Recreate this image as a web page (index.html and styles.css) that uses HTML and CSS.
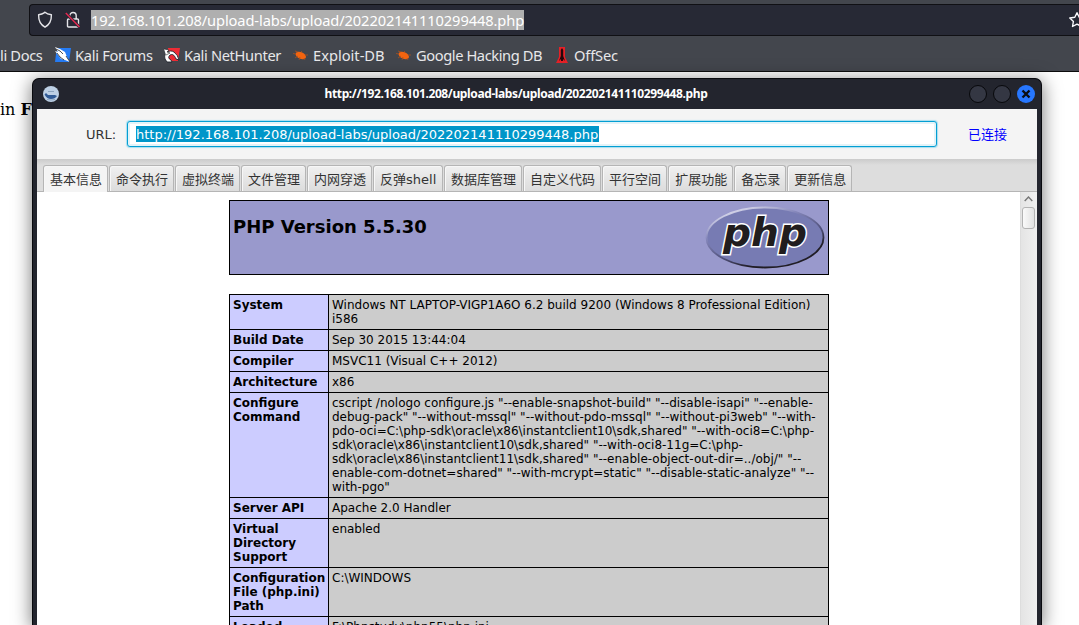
FILE: index.html
```
<!DOCTYPE html>
<html lang="zh-CN">
<head>
    <meta charset="UTF-8">
    <title>phpinfo</title>
    <link rel="stylesheet" href="styles.css">
</head>
<body>
    <header class="browser">
        <div class="address-bar">
            <svg class="shield" width="16" height="18" viewBox="0 0 16 18"><path d="M8 1.2Q10 3 14.4 3.7C14.6 10 12.6 13.5 8 16.2 3.4 13.5 1.4 10 1.6 3.7 6 3 6 2.5 8 1.2Z" fill="none" stroke="#e4e4e8" stroke-width="1.4" stroke-linejoin="round"/></svg>
            <svg class="lock" width="16" height="18" viewBox="0 0 16 18"><path d="M4.8 8V4.7a3.2 3.2 0 0 1 6.4 0V8M3.5 8h9q1 0 1 1v6q0 1-1 1h-9q-1 0-1-1V9q0-1 1-1Z" fill="none" stroke="#e4e4e8" stroke-width="1.4"/><path d="M.8 2 14.5 16" stroke="#272935" stroke-width="3.2"/><path d="M.8 2 14.5 16" stroke="#e22850" stroke-width="1.5"/></svg>
            <span class="address">192.168.101.208/upload-labs/upload/202202141110299448.php</span>
            <svg class="star" width="18" height="18" viewBox="0 0 18 18"><path d="m9 1.7 2.2 4.6 5 .7-3.6 3.5.9 5L9 13.1l-4.5 2.4.9-5L1.8 7l5-.7Z" fill="none" stroke="#fbfbfe" stroke-width="1.4" stroke-linejoin="round"/></svg>
        </div>
        <nav class="bookmarks">
            <span class="bookmark docs">li Docs</span>
            <span class="bookmark forums"><svg width="16" height="16" viewBox="0 0 16 16"><path d="M3 1h13l-2 14H0l1-8Z" fill="#267cf4"/><path d="M0 0 5 2l5 3 2 5 3 5-5-2-4-1-3-4-3-4 3 1Z" fill="#fff"/><path d="m1 2 4 2 3 3M2 6l3 4 4 3m2-4 4 6" fill="none" stroke="#20242c" stroke-width=".8"/></svg>Kali Forums</span>
            <span class="bookmark nethunter"><svg width="16" height="16" viewBox="0 0 16 16"><path d="M4 1h12l-2 13H3Z" fill="#ed2c35"/><path d="M1 12C-1 6 6 2 10 5q4 3 5 8l-3-1C10 7 8 7 6 8q-3 3 1 5l1 2H3Z" fill="#fff" stroke="#20242c" stroke-width=".9"/><path d="m0 2 5 1-2 2 3 1-4 2" stroke="#222" fill="#fff" stroke-width=".6"/></svg>Kali NetHunter</span>
            <span class="bookmark exploit"><svg width="16" height="16" viewBox="0 0 16 16"><ellipse cx="8" cy="8.5" rx="5.5" ry="3.3" transform="rotate(24 8 8)" fill="#f3640f"/><path d="m3 7-3-.5M5 5 2 4M8 5l1-1M12 8l3 0M5 9l-3 2M7 10l-1 3M11 11l1 2" stroke="#a8501e" stroke-width=".8"/></svg>Exploit-DB</span>
            <span class="bookmark google"><svg width="16" height="16" viewBox="0 0 16 16"><ellipse cx="8" cy="8.5" rx="5.5" ry="3.3" transform="rotate(24 8 8)" fill="#f3640f"/><path d="m3 7-3-.5M5 5 2 4M8 5l1-1M12 8l3 0M5 9l-3 2M7 10l-1 3M11 11l1 2" stroke="#a8501e" stroke-width=".8"/></svg>Google Hacking DB</span>
            <span class="bookmark offsec"><svg width="16" height="16" viewBox="0 0 16 16"><path d="M5 0h6v10l3 6H2l3-6Z" fill="#e52127"/><path d="M8 1 6.8 3v6L5 14l2-2v2h2v-2l2 2-1.8-5V3Z" fill="#25080c"/></svg>OffSec</span>
        </nav>
    </header>

    <main class="page">
        <p>in <b>File</b></p>
    </main>

    <section class="window">
        <div class="titlebar">
            <svg class="app-icon" width="16" height="16" viewBox="0 0 16 16"><circle cx="8" cy="8" r="8" fill="#bdd0e5"/><path d="M1.5 8.5 3 7l2 2h7l2 1q-2 3-6 3-4 0-6.500-4.500Z" fill="#315b96"/><path d="M5 5.500h6M4 13.500q4 1 8 0" stroke="#8ba4bf" fill="none"/></svg>
            <span class="title">http://192.168.101.208/upload-labs/upload/202202141110299448.php</span>
            <div class="controls">
                <i></i><i></i>
                <i class="close"><svg width="10" height="10" viewBox="0 0 10 10"><path d="m1.500 1.500 7 7m0-7-7 7" stroke="#0b0d12" stroke-width="2.400"/></svg></i>
            </div>
        </div>
        <div class="url-row">
            <label>URL:</label>
            <div class="url-input"><span>http://192.168.101.208/upload-labs/upload/202202141110299448.php</span></div>
            <span class="status">已连接</span>
        </div>
        <div class="tabs">
            <span class="tab active">基本信息</span>
            <span class="tab">命令执行</span>
            <span class="tab">虚拟终端</span>
            <span class="tab">文件管理</span>
            <span class="tab">内网穿透</span>
            <span class="tab shell">反弹shell</span>
            <span class="tab">数据库管理</span>
            <span class="tab">自定义代码</span>
            <span class="tab">平行空间</span>
            <span class="tab">扩展功能</span>
            <span class="tab">备忘录</span>
            <span class="tab">更新信息</span>
        </div>
        <div class="view">
            <div class="phpinfo">
                <div class="php-head">
                    <h1>PHP Version 5.5.30</h1>
                    <svg class="php-logo" width="120" height="67" viewBox="0 0 120 67">
                        <defs>
                            <linearGradient id="rim" x1="0.2" y1="0" x2="0.8" y2="1">
                                <stop offset="0" stop-color="#e4e4f2"/>
                                <stop offset="0.3" stop-color="#8587bb"/>
                                <stop offset="0.6" stop-color="#50517b"/>
                                <stop offset="0.8" stop-color="#201d25"/>
                            </linearGradient>
                        </defs>
                        <ellipse cx="60" cy="33.5" rx="58.5" ry="30" fill="#777bb3" stroke="url(#rim)" stroke-width="1.8"/>
                        <text class="logo-text" x="18" y="42" textLength="84" lengthAdjust="spacingAndGlyphs">php</text>
                    </svg>
                </div>
                <table>
                    <tr><th>System</th><td>Windows NT LAPTOP-VIGP1A6O 6.2 build 9200 (Windows 8 Professional Edition) i586</td></tr>
                    <tr><th>Build Date</th><td>Sep 30 2015 13:44:04</td></tr>
                    <tr><th>Compiler</th><td>MSVC11 (Visual C++ 2012)</td></tr>
                    <tr><th>Architecture</th><td>x86</td></tr>
                    <tr><th>Configure Command</th><td>cscript /nologo configure.js "--enable-snapshot-build" "--disable-isapi" "--enable-<br>debug-pack" "--without-mssql" "--without-pdo-mssql" "--without-pi3web" "--with-<br>pdo-oci=C:\php-sdk\oracle\x86\instantclient10\sdk,shared" "--with-oci8=C:\php-<br>sdk\oracle\x86\instantclient10\sdk,shared" "--with-oci8-11g=C:\php-<br>sdk\oracle\x86\instantclient11\sdk,shared" "--enable-object-out-dir=../obj/" "--<br>enable-com-dotnet=shared" "--with-mcrypt=static" "--disable-static-analyze" "--<br>with-pgo"</td></tr>
                    <tr><th>Server API</th><td>Apache 2.0 Handler</td></tr>
                    <tr><th>Virtual Directory Support</th><td>enabled</td></tr>
                    <tr><th>Configuration File (php.ini) Path</th><td>C:\WINDOWS</td></tr>
                    <tr><th>Loaded</th><td>F:\Phpstudy\php55\php.ini</td></tr>
                </table>
            </div>
            <div class="scrollbar">
                <svg width="9" height="6" viewBox="0 0 9 6"><path d="m.7 5 3.8-4 3.8 4" fill="none" stroke="#777" stroke-width="1.4"/></svg>
                <div class="thumb"></div>
            </div>
        </div>
    </section>
</body>
</html>
```
FILE: styles.css
```
* {
    box-sizing: border-box;
}
body {
    margin: 0;
    height: 625px;
    overflow: hidden;
    background: #fff;
    position: relative;
}
svg {
    display: block;
    flex: none;
}
.browser {
    height: 72px;
    padding-top: 4px;
    background: #43464d;
    border-bottom: 1px solid #0c0c0d;
    font-family: "Noto Sans", sans-serif;
    color: #e8e8ea;
}
.address-bar {
    display: flex;
    align-items: center;
    height: 32px;
    margin-left: 29px;
    padding-left: 7px;
    border: 1px solid #101014;
    border-right: 0;
    border-radius: 4px 0 0 4px;
    background: #272935;
    overflow: hidden;
}
.lock {
    margin: 0 10px 0 12px;
}
.address {
    width: 433px;
    height: 20px;
    line-height: 20px;
    font-size: 14.67px;
    letter-spacing: -0.11px;
    white-space: nowrap;
    color: #fff;
    background: #afafaf;
}
.star {
    margin: 0 -7px 0 auto;
}
.bookmarks {
    display: flex;
    height: 35px;
    padding-top: 3px;
    align-items: center;
    gap: 12px;
    font-size: 14.67px;
    white-space: nowrap;
}
.bookmark {
    display: flex;
    align-items: center;
    gap: 4px;
}
.docs {
    width: 43px;
    letter-spacing: -0.35px;
}
.forums {
    width: 97px;
    letter-spacing: -0.3px;
}
.nethunter {
    width: 117px;
    letter-spacing: -0.35px;
}
.exploit {
    width: 91px;
}
.google {
    width: 146px;
    letter-spacing: -0.41px;
}
.offsec {
    letter-spacing: -0.15px;
}
.page {
    font-family: "DejaVu Serif", serif;
    font-size: 16px;
}
.page p {
    margin: 28px 0 0;
    color: #000;
}
.window {
    position: absolute;
    left: 32px;
    top: 78px;
    width: 1010px;
    height: 547px;
    border: 1px solid #090a0e;
    border-bottom: 0;
    border-radius: 7px 7px 0 0;
    background: #23252e;
    padding: 0 4px;
    box-shadow: 0 3px 18px 1px rgba(0, 0, 0, 0.5);
    font-family: "DejaVu Sans", "Noto Sans CJK SC", sans-serif;
}
.titlebar {
    display: grid;
    grid-template-columns: 40px 1fr 82px;
    align-items: center;
    height: 30px;
    color: #fff;
}
.app-icon {
    margin-left: 6px;
}
.title {
    text-align: center;
    font: bold 12px "Noto Sans", sans-serif;
    letter-spacing: -0.38px;
    white-space: nowrap;
    padding-bottom: 1px;
}
.controls {
    display: flex;
    gap: 6px;
    justify-content: flex-end;
    padding-right: 2px;
}
.controls i {
    width: 18px;
    height: 18px;
    border: 1px solid #07080b;
    border-radius: 50%;
    background: #343743;
}
.controls .close {
    display: flex;
    align-items: center;
    justify-content: center;
    border: 0;
    background: #2777ff;
}
.url-row {
    display: flex;
    align-items: center;
    height: 50px;
    padding-left: 49px;
    background: #f4f4f4;
    font-size: 13px;
    color: #333;
}
.url-row label {
    width: 41px;
}
.url-input {
    width: 810px;
    height: 26px;
    padding: 4px 8px;
    border: 1px solid #039ed3;
    border-radius: 3px;
    background: #fff;
    box-shadow: 0 0 1px 1px #a9deef, inset 0 0 0 2px #e3f3f8;
}
.url-input span {
    display: block;
    width: 463px;
    height: 16px;
    line-height: 17px;
    white-space: nowrap;
    color: #fff;
    background: #0096c9;
}
.status {
    margin-left: 31px;
    padding-bottom: 2px;
    color: #00f;
}
.tabs {
    display: flex;
    gap: 1px;
    height: 33px;
    padding: 6px 0 0 6px;
    background: linear-gradient(#cbcbcb, #ddd 6px);
    border-bottom: 1px solid #b5b5b5;
    font-size: 13px;
    color: #333;
}
.tab {
    height: 26px;
    padding: 0 5px 0 6px;
    border: 1px solid #b5b5b5;
    border-bottom: 0;
    border-radius: 3px 3px 0 0;
    line-height: 28px;
    white-space: nowrap;
    background: linear-gradient(#f0f0f0, #dcdcdc);
    box-shadow: inset 1px 1px #f7f7f7;
}
.tab.active {
    height: 27px;
    background: #f4f4f4;
}
.tab.shell {
    width: 70px;
}
.view {
    display: flex;
    height: 433px;
    overflow: hidden;
    background: #fff;
}
.phpinfo {
    width: 600px;
    margin: 8px 191px 0 192px;
    color: #000;
    font-size: 12px;
    line-height: 14px;
}
.php-head {
    display: flex;
    justify-content: space-between;
    height: 75px;
    padding: 3px;
    border: 1px solid #000;
    background: #9999cc;
}
.php-head h1 {
    margin: 12px 0 0;
    font-size: 18px;
    line-height: 21px;
}
.logo-text {
    font: italic bold 39px "DejaVu Sans", sans-serif;
    fill: #211d1e;
    stroke: #fff;
    stroke-width: 3px;
    paint-order: stroke;
}
table {
    width: 600px;
    margin-top: 19px;
    border-collapse: collapse;
    table-layout: fixed;
}
th, td {
    padding: 3px;
    border: 1px solid #000;
    vertical-align: top;
    text-align: left;
}
th {
    width: 99px;
    padding-right: 0;
    background: #ccccff;
}
td {
    background: #ccc;
}
.scrollbar {
    display: flex;
    flex-direction: column;
    align-items: center;
    gap: 5px;
    width: 17px;
    padding: 4px 2px 0 0;
    border-left: 1px solid #ddd;
    background: linear-gradient(90deg, #e4e4e4, #f0f0f0);
}
.thumb {
    width: 13px;
    height: 22px;
    border: 1px solid #b3b3b3;
    border-radius: 3px;
    background: linear-gradient(90deg, #fafafa, #e2e2e2);
}
```
